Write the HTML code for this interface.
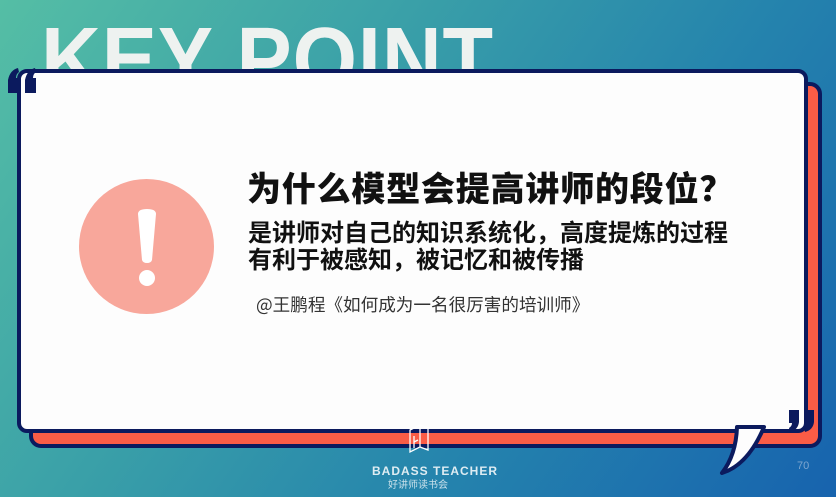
<!DOCTYPE html>
<html><head><meta charset="utf-8"><style>
html,body{margin:0;padding:0}
body{width:836px;height:497px;position:relative;overflow:hidden;
background:linear-gradient(125deg,#55bea5 0%,#3aa0a8 35%,#2584ad 65%,#1763ae 100%);
font-family:"Liberation Sans","Noto Sans CJK SC",sans-serif}
.key{position:absolute;left:41px;top:15px;font-size:90px;font-weight:bold;color:#eef2f0;letter-spacing:1px;line-height:1;white-space:nowrap;transform:scaleX(0.92);transform-origin:left}
.back{position:absolute;left:29px;top:82px;width:785px;height:358px;background:#fa5c46;border:4px solid #0b1a5e;border-radius:12px}
.front{position:absolute;left:17px;top:69px;width:783px;height:356px;background:#fdfdfd;border:4px solid #0b1a5e;border-radius:10px}
.t1{position:absolute;left:247px;top:162px;font-size:34px;letter-spacing:0.8px;font-weight:900;color:#111;white-space:nowrap;font-family:"Noto Sans CJK SC",sans-serif}
.t2{position:absolute;left:248px;top:217px;font-size:24px;line-height:27px;font-weight:bold;color:#111;white-space:nowrap;font-family:"Noto Sans CJK SC",sans-serif}
.t3{position:absolute;left:256px;top:292px;font-size:17.6px;color:#333;white-space:nowrap;font-family:"Noto Sans CJK SC",sans-serif}
.num{position:absolute;left:797px;top:460px;font-size:11px;color:#7ea6cf}
</style></head><body>
<div class="key">KEY POINT</div>
<div class="back"></div>
<div class="front"></div>
<svg style="position:absolute;left:0;top:0" width="836" height="497">
<g fill="#0b1a5e">
<path d="M8 80 q2-10 10-12 l1 4 q-3 2-3 6 l3 0 0 15 -11 0z"/>
<path d="M25 80 q2-10 10-12 l1 4 q-3 2-3 6 l3 0 0 15 -11 0z"/>
<path d="M789 410 l10 0 0 12 q-1 8-9 10 l-1-4 q3-2 3-5 l-3 0z"/>
<path d="M804 410 l10 0 0 12 q-1 8-9 10 l-1-4 q3-2 3-5 l-3 0z"/>
</g>
<path d="M737 427 Q736 455 722 473 Q748 465 764 427Z" fill="#fdfdfd" stroke="#0b1a5e" stroke-width="4" stroke-linejoin="round"/>
<g fill="none" stroke="#fff" stroke-width="1.3">
<path d="M410 430 l10-5 0 22 -10 5z M420 425 l8 3 0 22 -8-3z M414 436 l0 12 M414 442 l4-2"/>
</g>
<circle cx="146.5" cy="246.5" r="67.5" fill="#f8a79b"/>
<path d="M138 214 q0-5 9-5 q9 0 9 5 l-4 46 q-1 3-5 3 q-4 0-5-3z" fill="#fff"/>
<circle cx="147" cy="278" r="8" fill="#fff"/>
</svg>
<div class="t1">为什么模型会提高讲师的段位？</div>
<div class="t2">是讲师对自己的知识系统化，高度提炼的过程<br>有利于被感知，被记忆和被传播</div>
<div class="t3">@王鹏程《如何成为一名很厉害的培训师》</div>
<div style="position:absolute;left:372px;top:464px;font-size:12px;color:#fff;font-weight:bold;letter-spacing:1px;white-space:nowrap;opacity:.85">BADASS TEACHER</div>
<div style="position:absolute;left:388px;top:476px;font-size:10px;color:#fff;white-space:nowrap;opacity:.75;font-family:'Noto Sans CJK SC',sans-serif">好讲师读书会</div>
<div class="num">70</div>
</body></html>
